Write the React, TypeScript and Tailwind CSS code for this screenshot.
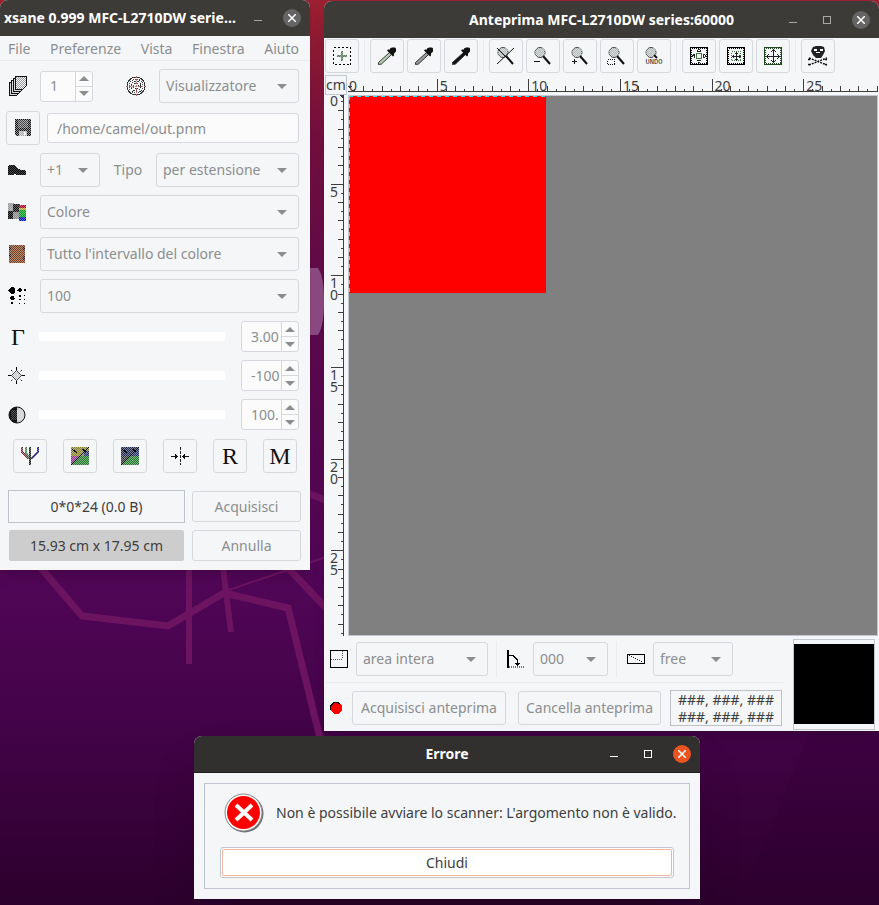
import React from 'react';

const FIELD = 'rounded-[3px] border border-[#d6d8dd] text-[#8b8e8f]';
const CM = 18.33;

/* ---------- Icons ---------- */

type IconProps = { children: React.ReactNode; w?: number; h?: number };

const Icon: React.FC<IconProps> = ({ children, w = 18, h = 18 }) => (
  <svg width={w} height={h} viewBox={`0 0 ${w} ${h}`} shapeRendering="crispEdges" className="shrink-0" aria-hidden="true">
    {children}
  </svg>
);

const CopiesIcon = () => (
  <Icon w={19} h={20}>
    {[0, 1, 2, 3].map((i) => (
      <path key={i} d={`M${1 + i * 2}.5 ${6 - i * 2}.5h11v9l-4 4h-7z`} fill="#d8d8d8" stroke="#111" />
    ))}
    <path d="M8 1h10v8l-4 4H8z" fill="#999" />
    <rect x="8" y="1" width="10" height="12" fill="url(#holes)" />
  </Icon>
);

const TargetIcon = () => (
  <Icon w={20} h={20}>
    <g fill="none" stroke="#222">
      <circle cx="10" cy="10" r="9" />
      <circle cx="10" cy="10" r="7" strokeDasharray="1 1" />
      <circle cx="10" cy="10" r="5" strokeDasharray="2 1" />
      <circle cx="10" cy="10" r="2.500" strokeDasharray="1 1" />
    </g>
    <path d="M0 10.5h20M10.5 0v20" stroke="#a06060" strokeDasharray="2 1" />
    <rect width="20" height="20" fill="url(#holes)" opacity="0.2" />
  </Icon>
);

const FloppyIcon = () => (
  <Icon>
    <path d="M1 0h16v17H2l-1-1z" fill="#111" />
    <path d="M4 1h10v8H4z" fill="#444" />
    <path d="M5 12h8v5H5z" fill="#aaa" />
    <path d="M10 13h2v3h-2z" fill="#fff" />
    <rect width="18" height="18" fill="url(#holes)" opacity="0.6" />
  </Icon>
);

const ShoeIcon = () => (
  <Icon>
    <path d="M1 4h6l2 3 4 2h4l1 2v3h-8l-4-1v1H0V7z" fill="#000" />
    <rect width="18" height="18" fill="url(#holes)" opacity="0.3" />
  </Icon>
);

const ColorModeIcon = () => (
  <Icon>
    <path d="M0 0h6v8H0z" fill="#999" />
    <path d="M5 1h7v8H5z" fill="#111" />
    <path d="M0 8h5v8H0z" fill="#000" />
    <path d="M5 9h6v7H5z" fill="#888" />
    <path d="M11 2h7v3h-7z" fill="#b00020" />
    <path d="M11 5h7v2h-7z" fill="#b8a030" />
    <path d="M11 7h7v7h-7z" fill="#009a20" />
    <path d="M11 14h7v4h-7z" fill="#0010c0" />
    <rect width="18" height="18" fill="url(#holes)" opacity="0.4" />
  </Icon>
);

const RangeIcon = () => (
  <Icon>
    <path d="M1 0h16v18H1z" fill="#7c3d1a" />
    <path d="M1 2h2v3H1zm0 7h2v3H1zm14-7h2v3h-2zm0 9h2v4h-2z" fill="#222" />
    <rect width="18" height="18" fill="url(#holes)" opacity="0.45" />
  </Icon>
);

const ResolutionIcon = () => (
  <Icon>
    <path d="M3 0h2l2 2v3l-2 2H3L1 5V2zM3 9h2l1 1v2l-1 1H3l-1-1v-2zM3 15h2v2H3zM11 1h2v1h1v2h-1v1h-2V4h-1V2h1zM11 8h2v2h-2zM11 12h2v1h-2zM11 16h1v1h-1zM16 2h2v2h-2zM16 8h1v1h-1zM16 12h1v1h-1zM16 16h1v1h-1z" />
    <path d="M0 3.5h8M2 11.500h5M9 3.500h6" stroke="#000" strokeDasharray="1 1" />
  </Icon>
);

const GammaIcon = () => (
  <Icon w={20} h={28}>
    <text x="3" y="22" fontSize="24" fontFamily="Liberation Serif, serif" fill="#111">Γ</text>
  </Icon>
);

const BrightnessIcon = () => (
  <Icon>
    <path d="M8.500 3.500l5 5-5 5-5-5z" fill="#c8c8c8" stroke="#444" />
    <path d="M8.500 0v3M8.500 14v3M0 8.500h3M14 8.500h3" stroke="#000" />
    <path d="M3 3l2 2M12 12l2 2M14 3l-2 2M3 14l2-2" stroke="#333" />
    <rect x="4" y="4" width="9" height="9" fill="url(#holes)" opacity="0.6" />
  </Icon>
);

const ContrastIcon = () => (
  <svg width="18" height="18" viewBox="0 0 18 18" aria-hidden="true">
    <circle cx="9" cy="9" r="8" fill="#d4d4d4" stroke="#111" />
    <path d="M9 1a8 8 0 0 0 0 16z" fill="#111" />
    <rect x="3" y="4" width="12" height="10" fill="url(#holes)" opacity="0.3" />
  </svg>
);

const RgbIcon = () => (
  <Icon>
    <g fill="none" strokeWidth="2">
      <path d="M1 0v5l7 7" stroke="#7a3040" />
      <path d="M5 0v6l4 5" stroke="#408a50" />
      <path d="M17 0v5l-7 7" stroke="#202070" />
      <path d="M9 0v18" stroke="#222" />
    </g>
    <rect width="18" height="18" fill="url(#holes)" opacity="0.4" />
  </Icon>
);

const EnhanceIcon: React.FC<{ top: string; side: string }> = ({ top, side }) => (
  <Icon>
    <path d="M0 0h18v9H0z" fill={top} />
    <path d="M13 4h5v5h-5z" fill="#20306a" />
    <path d="M0 9h8l-8 8z" fill={side} />
    <path d="M9 9h9v9H0z" fill="#1f7a28" />
    <rect width="18" height="18" fill="url(#holes)" opacity="0.45" />
    <path d="M0 18L18 0M1 2l5 4M11 2l4 3" stroke="#000" />
  </Icon>
);

const ResetIcon = () => (
  <Icon>
    <path d="M9 0v18" stroke="#222" strokeWidth="1" strokeDasharray="3 1" />
    <path d="M0 9.500h6M18 9.500h-6" stroke="#111" />
    <path d="M4 7h1v1h1v1h1v1H6v1H5v1H4zM14 7h-1v1h-1v1h-1v1h1v1h1v1h1z" fill="#111" />
  </Icon>
);

const LetterIcon: React.FC<{ letter: string }> = ({ letter }) => (
  <Icon w={28} h={32}>
    <text x="14" y="24" textAnchor="middle" fontSize="24" fontFamily="Liberation Serif, serif" fill="#111">{letter}</text>
  </Icon>
);

const BatchIcon = () => (
  <Icon>
    <path d="M.5.5h17v17H.5z" fill="none" stroke="#000" strokeDasharray="2 2" />
    <path d="M9 4v10M4 9h10" stroke="#5f7f5f" strokeWidth="2" />
    <rect x="3" y="3" width="12" height="12" fill="url(#holes)" opacity="0.3" />
  </Icon>
);

const PipetteIcon: React.FC<{ fill: string }> = ({ fill }) => (
  <svg width="18" height="18" viewBox="0 0 18 18" className="shrink-0" aria-hidden="true">
    <path d="M.5 17.500v-2l11-10 2 2-10 9.500z" fill={fill} stroke="#333" />
    <path d="M12 1.500l2-1h3l1 1v3l-2 2v2l-1 1-6-6 1-1h2z" fill="#111" />
  </svg>
);

const ZoomIcon: React.FC<{ children: React.ReactNode; short?: boolean }> = ({ children, short }) => (
  <svg width="20" height="18" viewBox="0 0 20 18" className="shrink-0" aria-hidden="true">
    <circle cx="7" cy="5.500" r="5" fill="#b4bab8" stroke="#444" />
    <rect x="2" y="1" width="10" height="9" fill="url(#holes)" opacity="0.6" />
    <path d={short ? 'M10 8l3 3' : 'M10 9l7 8'} stroke="#111" strokeWidth="2" />
    {children}
  </svg>
);

const FrameIcon: React.FC<{ children: React.ReactNode; stroke?: string }> = ({ children, stroke = '#000' }) => (
  <Icon>
    <path d="M.5.5h17v17H.5z" fill="none" stroke={stroke} />
    <path d="M1.500 1.500h15v15h-15z" fill="none" stroke={stroke} strokeDasharray="1 1" />
    {children}
  </Icon>
);

const SkullIcon = () => (
  <svg width="20" height="20" viewBox="0 0 20 20" className="shrink-0" aria-hidden="true">
    <path d="M5 1l3-1h5l3 1 1 4-2 4-2 3H8L5 9 3 5z" fill="#222" />
    <path d="M6 3h3v2H6zm6 0h3v2h-3zM8 6h4v1H8z" fill="#fff" />
    <path d="M1 12l18 7M1 19l18-7M0 13.500h3M17 13.500h3M0 18.500h3M17 18.500h3" stroke="#111" strokeDasharray="2 1" strokeWidth="1.500" />
  </svg>
);

const AreaIcon = () => (
  <Icon>
    <path d="M.5.5h17v17H.5z" fill="none" stroke="#000" />
    <path d="M1 9.500h12M12.500 1v8" stroke="#555" strokeDasharray="1 1" />
  </Icon>
);

const RotateIcon = () => (
  <Icon>
    <path d="M1 0v18" stroke="#000" strokeWidth="2" />
    <path d="M2 17h16" stroke="#777" strokeDasharray="1 1" strokeWidth="2" />
    <path d="M2 5.500h4l4 4v6" fill="none" stroke="#000" />
    <path d="M8 13h5l-2 3h-1z" fill="#000" />
  </Icon>
);

const RatioIcon = () => (
  <Icon h={12}>
    <path d="M.5 1.500h17v9H.5z" fill="none" stroke="#000" />
    <path d="M2 2h1v1H2zM4 3h1v1H4zM6 4h1v1H6zM8 5h1v1H8zM10 6h1v1h-1zM12 7h1v1h-1zM14 8h1v1h-1z" fill="#222" />
  </Icon>
);

const LampIcon = () => (
  <Icon w={12} h={12}>
    <path d="M4 0h4l4 4v4l-4 4H4L0 8V4z" fill="#f00" />
    <path d="M.5 8V4L4 .5h4l2 2" fill="none" stroke="#000" />
  </Icon>
);

const ErrorIcon = () => (
  <svg width="40" height="40" viewBox="0 0 40 40" className="shrink-0" aria-hidden="true">
    <circle cx="20.500" cy="20.500" r="19" fill="#707070" />
    <circle cx="19.500" cy="19.500" r="18.500" fill="#fff" stroke="#888" />
    <circle cx="19.500" cy="19.500" r="16.500" fill="#f00" />
    <path d="M12 12l16 15M28 12L12 27" stroke="#fff" strokeWidth="4" />
  </svg>
);

/* ---------- Controls ---------- */

const Arrow: React.FC<{ up?: boolean }> = ({ up }) => (
  <svg width="10" height="5" viewBox="0 0 10 5" aria-hidden="true">
    <path d={up ? 'M0 5h10L5 0z' : 'M0 0h10L5 5z'} fill="#8b8e8f" />
  </svg>
);

const Combo: React.FC<{ label: string; value: string; width: string; id?: string }> = ({ label, value, width, id }) => (
  <div className={`grid items-center ${width}`}>
    <select id={id} aria-label={label} className={`[grid-area:1/1] h-[34px] w-full appearance-none bg-transparent pl-[6px] ${FIELD}`}>
      <option>{value}</option>
    </select>
    <span className="pointer-events-none mr-[12px] justify-self-end [grid-area:1/1]">
      <Arrow />
    </span>
  </div>
);

const Spin: React.FC<{ label: string; value: string; width: string }> = ({ label, value, width }) => (
  <div className={`flex h-[31px] overflow-hidden bg-[#fbfbfc] ${width} ${FIELD}`}>
    <input type="text" aria-label={label} defaultValue={value} className="min-w-0 flex-1 bg-transparent pl-[9px] outline-none" />
    <div className="flex w-[17px] flex-col divide-y divide-[#d6d8dd] border-l border-[#d6d8dd]">
      <button aria-label={`${label} +`} className="flex flex-1 items-center justify-center"><Arrow up /></button>
      <button aria-label={`${label} -`} className="flex flex-1 items-center justify-center"><Arrow /></button>
    </div>
  </div>
);

const ToolButton: React.FC<{ label: string; children: React.ReactNode }> = ({ label, children }) => (
  <button aria-label={label} className={`flex h-[34px] w-[34px] shrink-0 items-center justify-center ${FIELD}`}>
    {children}
  </button>
);

const ToolSeparator = () => (
  <div className="flex h-[34px] w-[5px] shrink-0 justify-center">
    <div className="w-px bg-[#e9ebee]" />
  </div>
);

const WindowButtons: React.FC<{ active?: boolean; noMax?: boolean }> = ({ active, noMax }) => (
  <div className={`flex items-center gap-4 justify-self-end ${active ? 'text-white' : 'text-[#aaa8a5]'}`}>
    <button aria-label="Riduci" className="flex h-[18px] w-[18px] items-center justify-center">
      <Icon w={8} h={8}><path d="M0 6.500h8" stroke="currentColor" /></Icon>
    </button>
    {!noMax && (
      <button aria-label="Massimizza" className="flex h-[18px] w-[18px] items-center justify-center">
        <Icon w={8} h={8}><path d="M.5.5h7v7h-7z" fill="none" stroke="currentColor" /></Icon>
      </button>
    )}
    <button aria-label="Chiudi finestra" className={`flex h-[18px] w-[18px] items-center justify-center rounded-full ${active ? 'bg-[#e95420]' : 'bg-[#656565]'}`}>
      <svg width="8" height="8" viewBox="0 0 8 8" aria-hidden="true">
        <path d="M0 0l8 8M8 0L0 8" stroke="#fff" strokeWidth="1.500" />
      </svg>
    </button>
  </div>
);

/* ---------- Wallpaper ---------- */

const Wallpaper = () => (
  <svg className="absolute inset-0 h-full w-full" preserveAspectRatio="xMinYMin slice" viewBox="0 0 879 905" aria-hidden="true">
    <defs>
      <linearGradient id="sky" x1="0" y1="0" x2="0" y2="1">
        <stop offset="0" stopColor="#9c2030" />
        <stop offset="0.15" stopColor="#74103e" />
        <stop offset="0.35" stopColor="#5c0a4c" />
        <stop offset="0.65" stopColor="#500656" />
        <stop offset="0.8" stopColor="#430348" />
        <stop offset="1" stopColor="#2c002c" />
      </linearGradient>
      <pattern id="holes" width="2" height="2" patternUnits="userSpaceOnUse">
        <path d="M0 0h1v1H0zM1 1h1v1H1z" fill="#f5f6f8" />
      </pattern>
    </defs>
    <rect width="879" height="905" fill="url(#sky)" />
    <path d="M310 268h8q6 8 6 33t-6 34h-8z" fill="#8d4a83" />
    <g fill="none" stroke="#6d1461" strokeWidth="7">
      <path d="M41 568l41 48 86 10 56-33 64 15 32 130" />
      <path d="M189 560v104" strokeWidth="6" />
      <path d="M222 560l9 72" strokeWidth="6" />
      <path d="M288 568l40 42M300 490l30 12" />
      <path d="M226 591l100-34" strokeWidth="2" />
    </g>
    <path d="M810 731L740 905h139V731z" fill="#2c0030" opacity="0.2" />
  </svg>
);

/* ---------- Main window ---------- */

const MENU = ['File', 'Preferenze', 'Vista', 'Finestra', 'Aiuto'];

const SLIDERS = [
  { label: 'Gamma', value: '3.00', icon: <GammaIcon /> },
  { label: 'Luminosità', value: '-100', icon: <BrightnessIcon /> },
  { label: 'Contrasto', value: '100.', icon: <ContrastIcon /> },
];

const MainWindow = () => (
  <section className="absolute left-0 top-0 w-[310px] rounded-t-lg bg-[#f5f6f8] shadow-lg">
    <header className="flex h-9 items-center justify-between rounded-t-lg bg-[#3d3b38] pl-1 pr-[9px]">
      <h1 className="whitespace-nowrap font-bold text-white">xsane 0.999 MFC-L2710DW serie…</h1>
      <WindowButtons noMax />
    </header>
    <nav className="flex h-[25px] items-center justify-between border-b border-[#e9ebee] pl-2 pr-[11px] pt-px text-[#8b8e8f]">
      {MENU.map((item) => (
        <button key={item}>{item}</button>
      ))}
    </nav>

    <div className="pb-[5px] pl-2 pr-[11px] pt-1">
      <div className="flex h-[42px] items-center">
        <div className="w-8"><CopiesIcon /></div>
        <Spin label="Numero di copie" value="1" width="w-[53px]" />
        <div className="flex flex-1 justify-end pr-[13px]"><TargetIcon /></div>
        <Combo label="Destinazione" value="Visualizzatore" width="w-[140px]" />
      </div>
      <div className="-ml-[2px] flex h-[42px] items-center gap-[7px]">
        <ToolButton label="Sfoglia"><FloppyIcon /></ToolButton>
        <input
          type="text"
          aria-label="Nome del file"
          defaultValue="/home/camel/out.pnm"
          className={`h-[30px] min-w-0 flex-1 bg-[#fbfbfc] pl-[9px] ${FIELD}`}
        />
      </div>
      <div className="flex h-[42px] items-center">
        <div className="w-8"><ShoeIcon /></div>
        <Combo label="Passo" value="+1" width="w-[60px]" />
        <label htmlFor="tipo" className="flex-1 text-center text-[#8b8e8f]">Tipo</label>
        <Combo id="tipo" label="Tipo" value="per estensione" width="w-[143px]" />
      </div>
      <div className="flex h-[42px] items-center">
        <div className="w-8"><ColorModeIcon /></div>
        <Combo label="Modalità" value="Colore" width="flex-1" />
      </div>
      <div className="flex h-[42px] items-center">
        <div className="w-8"><RangeIcon /></div>
        <Combo label="Intervallo" value="Tutto l'intervallo del colore" width="flex-1" />
      </div>
      <div className="flex h-[42px] items-center">
        <div className="w-8"><ResolutionIcon /></div>
        <Combo label="Risoluzione" value="100" width="flex-1" />
      </div>

      {SLIDERS.map((s) => (
        <div key={s.label} className="flex h-[39px] items-center">
          <div className="w-[31px]">{s.icon}</div>
          <input
            type="range"
            aria-label={s.label}
            className="mr-4 h-[9px] min-w-0 flex-1 appearance-none bg-white [&::-webkit-slider-thumb]:w-0 [&::-webkit-slider-thumb]:appearance-none"
          />
          <Spin label={`Valore ${s.label}`} value={s.value} width="w-[58px]" />
        </div>
      ))}

      <div className="flex h-[44px] items-center gap-4 pl-[5px]">
        <ToolButton label="RGB"><RgbIcon /></ToolButton>
        <ToolButton label="Negativo"><EnhanceIcon top="#8a8028" side="#903090" /></ToolButton>
        <ToolButton label="Miglioramento automatico"><EnhanceIcon top="#1c2850" side="#333" /></ToolButton>
        <ToolButton label="Valori predefiniti"><ResetIcon /></ToolButton>
        <ToolButton label="Ripristina"><LetterIcon letter="R" /></ToolButton>
        <ToolButton label="Memorizza"><LetterIcon letter="M" /></ToolButton>
      </div>

      <div className="-mr-[2px] grid grid-cols-[177px_1fr] items-center gap-x-[7px] pt-[9px]">
        <div className="flex h-[39px] items-center">
          <p className="flex h-[33px] flex-1 items-center justify-center border border-[#bcc1ca] text-[#3d3d3d]">0*0*24 (0.0 B)</p>
        </div>
        <button className={`h-[31px] ${FIELD}`}>Acquisisci</button>
        <div className="flex h-[39px] items-center px-px">
          <p className="flex h-[31px] flex-1 items-center justify-center rounded-[2px] bg-[#cdcdcd] text-[#3d3d3d]">15.93 cm x 17.95 cm</p>
        </div>
        <button className={`h-[31px] ${FIELD}`}>Annulla</button>
      </div>
    </div>
  </section>
);

/* ---------- Preview window ---------- */

const LABELS = [0, 5, 10, 15, 20, 25];

const tickLength = (i: number) => (i % 10 === 0 ? 13 : i % 2 === 0 ? 6 : 3);

const TopRuler = () => (
  <svg className="h-[20px] min-w-0 flex-1" shapeRendering="crispEdges" aria-hidden="true">
    <path d="M0 11h4l-2 3z" fill="#3d3d3d" />
    <path d="M0 16.500h2000" stroke="#3d3d3d" />
    {Array.from({ length: 200 }, (_, n) => n + 1).map((i) => {
      const x = Math.round((i * CM) / 2) - 2.5;
      return <path key={i} d={`M${x} 17v-${tickLength(i)}`} stroke="#3d3d3d" />;
    })}
    {LABELS.map((cm) => (
      <text key={cm} x={cm === 0 ? 1 : cm * CM} y="16" fontSize="14" fill="#3d3d3d">{cm}</text>
    ))}
  </svg>
);

const SideRuler = () => (
  <svg className="h-[541px] w-[18px]" shapeRendering="crispEdges" aria-hidden="true">
    <path d="M11 0h4v3z" fill="#3d3d3d" />
    <path d="M15.500 0v541" stroke="#3d3d3d" />
    {Array.from({ length: 59 }, (_, n) => n + 1).map((i) => {
      const y = Math.round((i * CM) / 2) - 2.5;
      return <path key={i} d={`M16 ${y}h-${tickLength(i)}`} stroke="#3d3d3d" />;
    })}
    {LABELS.map((cm) =>
      String(cm).split('').map((digit, d) => (
        <text key={`${cm}-${d}`} x="2" y={Math.max(11, Math.round(cm * CM) + 10) + d * 12} fontSize="14" fill="#3d3d3d">{digit}</text>
      )),
    )}
  </svg>
);

const PreviewWindow = () => (
  <section className="absolute left-[324px] right-0 top-px rounded-t-lg bg-[#f5f6f8] shadow-lg">
    <header className="grid h-[37px] grid-cols-[1fr_auto_1fr] items-center rounded-t-lg bg-[#3d3b38] px-[9px]">
      <h2 className="col-start-2 whitespace-nowrap font-bold text-white">Anteprima MFC-L2710DW series:60000</h2>
      <WindowButtons />
    </header>

    <div className="flex gap-[3px] pb-[2px] pl-px pt-px">
      <ToolButton label="Selezione multipla"><BatchIcon /></ToolButton>
      <ToolSeparator />
      <ToolButton label="Punto bianco"><PipetteIcon fill="#b4d0b4" /></ToolButton>
      <ToolButton label="Punto grigio"><PipetteIcon fill="#9a9a9a" /></ToolButton>
      <ToolButton label="Punto nero"><PipetteIcon fill="#111" /></ToolButton>
      <ToolSeparator />
      <ToolButton label="Zoom intero"><ZoomIcon><path d="M1 1l16 16M18 1L1 17" stroke="#111" /></ZoomIcon></ToolButton>
      <ToolButton label="Riduci zoom"><ZoomIcon><path d="M1 14.500h6" stroke="#111" /></ZoomIcon></ToolButton>
      <ToolButton label="Aumenta zoom"><ZoomIcon><path d="M2 14.500h5M4.500 12v5" stroke="#111" /></ZoomIcon></ToolButton>
      <ToolButton label="Zoom su area"><ZoomIcon><path d="M.5 12.500h7v5h-7z" fill="none" stroke="#111" strokeDasharray="1 1" shapeRendering="crispEdges" /></ZoomIcon></ToolButton>
      <ToolButton label="Annulla zoom">
        <ZoomIcon short>
          <text x="10" y="17" textAnchor="middle" fontSize="7" fontFamily="Liberation Mono, monospace" fill="#111">UNDO</text>
        </ZoomIcon>
      </ToolButton>
      <ToolSeparator />
      <ToolButton label="Area automatica">
        <FrameIcon>
          <path d="M6.500 6.500h5v5h-5z" fill="none" stroke="#3f7a3f" />
          <path d="M8 2h2v1H8zM7 3h1v1h2V3h1v2H7zM8 15h2v1H8zM7 13h4v1H7zM2 8h1v2H2zM3 7h2v4H4V9H3zM15 8h1v2h-1zM13 7h2v1h-1v2h1v1h-2z" fill="#222" />
        </FrameIcon>
      </ToolButton>
      <ToolButton label="Aumenta area">
        <FrameIcon>
          <path d="M4.500 4.500h9v9h-9z" fill="none" stroke="#3f7a3f" strokeDasharray="1 1" />
          <path d="M9.500 5v9M5 9.500h9" stroke="#222" />
          <path d="M8 6h3v1H8zM8 12h3v1H8zM6 8h1v3H6zM12 8h1v3h-1z" fill="#222" />
        </FrameIcon>
      </ToolButton>
      <ToolButton label="Area massima">
        <FrameIcon stroke="#1f4a1f">
          <path d="M9.500 2v14M2 9.500h14" stroke="#222" />
          <path d="M8 3h3v1H8zM7 4h1v1H7zM11 4h1v1h-1zM8 14h3v1H8zM7 13h1v1H7zM11 13h1v1h-1zM3 8h1v3H3zM4 7h1v1H4zM4 11h1v1H4zM14 8h1v3h-1zM13 7h1v1h-1zM13 11h1v1h-1z" fill="#222" />
        </FrameIcon>
      </ToolButton>
      <ToolSeparator />
      <ToolButton label="Elimina cache"><SkullIcon /></ToolButton>
    </div>

    <div className="grid grid-cols-[24px_1fr] pr-px">
      <div className="flex h-[20px] pl-px">
        <span className="flex h-[20px] w-[22px] items-center justify-center border border-[#c2c6d0] text-[#3d3d3d]">cm</span>
      </div>
      <div className="flex"><TopRuler /></div>
      <div className="pl-1"><SideRuler /></div>
      <div className="h-[541px] border border-[#c2c6d0] bg-[#808080]">
        {/* Scanned area with its marching selection edge */}
        <div className="h-[197px] w-[197px] bg-[#ff0000] bg-no-repeat [background-image:repeating-linear-gradient(90deg,cyan_0_4px,red_4px_8px),repeating-linear-gradient(180deg,cyan_0_4px,red_4px_8px)] [background-size:100%_1px,1px_100%]" />
      </div>
    </div>

    <footer className="flex h-[95px] items-start justify-between pr-1">
      <div className="flex flex-1 flex-col">
        <div className="flex h-[46px] items-center pl-[6px]">
          <div className="flex items-center gap-2">
            <AreaIcon />
            <Combo label="Area" value="area intera" width="w-[132px]" />
          </div>
          <div className="mx-2 h-9 w-px bg-[#e9ebee]" />
          <div className="flex items-center gap-2 pl-[2px]">
            <RotateIcon />
            <Combo label="Rotazione" value="000" width="w-[75px]" />
          </div>
          <div className="mx-2 h-9 w-px bg-[#e9ebee]" />
          <div className="flex items-center gap-2 pl-[2px]">
            <RatioIcon />
            <Combo label="Proporzioni" value="free" width="w-[80px]" />
          </div>
        </div>
        <div className="mx-[2px] h-px bg-[#e9ebee]" />
        <div className="flex h-[48px] items-center pl-[6px] pt-[2px]">
          <LampIcon />
          <button className={`ml-[10px] h-[34px] w-[154px] whitespace-nowrap ${FIELD}`}>Acquisisci anteprima</button>
          <button className={`ml-3 h-[34px] w-[143px] whitespace-nowrap ${FIELD}`}>Cancella anteprima</button>
          <p className="ml-[9px] w-[112px] whitespace-nowrap border border-[#bcc1ca] text-center leading-[17px] text-[#3d3d3d]">
            ###, ###, ###
            <br />
            ###, ###, ###
          </p>
        </div>
      </div>
      <div className="ml-2 mt-[3px] w-[82px] border border-[#c2c6d0] pb-[5px] pt-[4px]">
        <div className="h-[80px] bg-black" />
      </div>
    </footer>
  </section>
);

/* ---------- Error dialog ---------- */

const ErrorDialog = () => (
  <section role="dialog" aria-label="Errore" className="absolute left-[194px] top-[736px] w-[506px] rounded-t-lg bg-[#f5f6f8] shadow-2xl">
    <header className="grid h-[37px] grid-cols-[1fr_auto_1fr] items-center rounded-t-lg border-b border-[#1f1d1c] bg-[#322f2f] px-[9px]">
      <h2 className="col-start-2 font-bold text-white">Errore</h2>
      <WindowButtons active />
    </header>
    <div className="p-[10px]">
      <div className="border border-[#bfc3cd] px-[15px] pb-[10px] pt-[9px]">
        <div className="flex h-10 items-center gap-3 whitespace-nowrap pl-1 text-[#3d3d3d]">
          <ErrorIcon />
          <p>Non è possibile avviare lo scanner: L'argomento non è valido.</p>
        </div>
        <button className="mt-[14px] flex h-[31px] w-full rounded-[3px] border border-[#c2c6d0] bg-white p-px text-[#3d3d3d]">
          <span className="flex h-full flex-1 items-center justify-center rounded-[2px] border border-[#f0b5a0]">Chiudi</span>
        </button>
      </div>
    </div>
  </section>
);

const App: React.FC = () => {
  return (
    <main className="relative min-h-screen overflow-hidden bg-[#2c002c] font-['Noto_Sans',sans-serif] text-[14px] leading-[20px]">
      <Wallpaper />
      <MainWindow />
      <PreviewWindow />
      <ErrorDialog />
    </main>
  );
};

export default App;
